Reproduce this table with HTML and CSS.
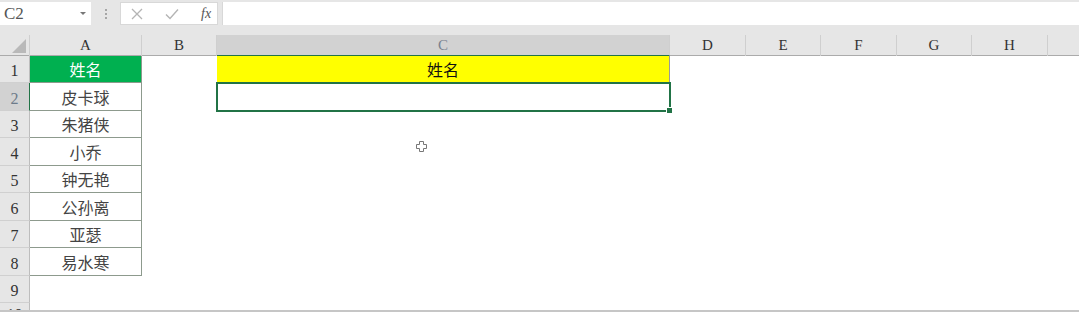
FILE: index.html
```
<!DOCTYPE html>
<html lang="zh-CN">
<head>
<meta charset="utf-8">
<title>Sheet</title>
<link rel="stylesheet" href="styles.css">
</head>
<body>
<div class="app">
  <div class="fbar">
    <div class="namebox"><span class="ref">C2</span><span class="dd"></span></div>
    <div class="grip"><i></i><i></i><i></i></div>
    <div class="btns">
      <svg class="ic" width="12" height="12" viewBox="0 0 12 12"><path d="M1 1L11 11M11 1L1 11" stroke="#b4b4b4" stroke-width="1.3" fill="none"/></svg>
      <svg class="ic" width="14" height="12" viewBox="0 0 14 12"><path d="M1 6.5L5 10.5L13 1.5" stroke="#b4b4b4" stroke-width="1.4" fill="none"/></svg>
      <span class="fx">fx</span>
    </div>
    <div class="finput"></div>
  </div>
  <div class="gap"></div>
  <div class="row colhead">
    <div class="corner"><svg width="14" height="14" viewBox="0 0 14 14"><path d="M14 0L14 14L0 14Z" fill="#b9b9b9"/></svg></div>
    <div class="ch">A</div><div class="ch">B</div><div class="ch sel-h">C</div><div class="ch">D</div><div class="ch">E</div><div class="ch">F</div><div class="ch">G</div><div class="ch">H</div><div class="ch last"></div>
  </div>
  <div class="row r27"><div class="rh">1</div><div class="c a head">姓名</div><div class="c"></div><div class="c yellow">姓名</div><div class="c"></div><div class="c"></div><div class="c"></div><div class="c"></div><div class="c"></div><div class="c"></div></div>
  <div class="row r28"><div class="rh sel-r">2</div><div class="c a">皮卡球</div><div class="c"></div><div class="c active"></div><div class="c"></div><div class="c"></div><div class="c"></div><div class="c"></div><div class="c"></div><div class="c"></div></div>
  <div class="row r27"><div class="rh">3</div><div class="c a">朱猪侠</div><div class="c"></div><div class="c"></div><div class="c"></div><div class="c"></div><div class="c"></div><div class="c"></div><div class="c"></div><div class="c"></div></div>
  <div class="row r28"><div class="rh">4</div><div class="c a">小乔</div><div class="c"></div><div class="c"></div><div class="c"></div><div class="c"></div><div class="c"></div><div class="c"></div><div class="c"></div><div class="c"></div></div>
  <div class="row r27"><div class="rh">5</div><div class="c a">钟无艳</div><div class="c"></div><div class="c"></div><div class="c"></div><div class="c"></div><div class="c"></div><div class="c"></div><div class="c"></div><div class="c"></div></div>
  <div class="row r28"><div class="rh">6</div><div class="c a">公孙离</div><div class="c"></div><div class="c"></div><div class="c"></div><div class="c"></div><div class="c"></div><div class="c"></div><div class="c"></div><div class="c"></div></div>
  <div class="row r27"><div class="rh">7</div><div class="c a">亚瑟</div><div class="c"></div><div class="c"></div><div class="c"></div><div class="c"></div><div class="c"></div><div class="c"></div><div class="c"></div><div class="c"></div></div>
  <div class="row r28"><div class="rh">8</div><div class="c a">易水寒</div><div class="c"></div><div class="c"></div><div class="c"></div><div class="c"></div><div class="c"></div><div class="c"></div><div class="c"></div><div class="c"></div></div>
  <div class="row r27"><div class="rh">9</div><div class="c"></div><div class="c"></div><div class="c"></div><div class="c"></div><div class="c"></div><div class="c"></div><div class="c"></div><div class="c"></div><div class="c"></div></div>
  <div class="row r28"><div class="rh top">10</div><div class="c"></div><div class="c"></div><div class="c"></div><div class="c"></div><div class="c"></div><div class="c"></div><div class="c"></div><div class="c"></div><div class="c"></div></div>
  <svg class="cursor" width="11" height="11" viewBox="0 0 11 11"><path d="M3.5 0.5H7.5V3.5H10.5V7.5H7.5V10.5H3.5V7.5H0.5V3.5H3.5Z" fill="#fff" stroke="#777" stroke-width="1"/></svg>
</div>
</body>
</html>
```
FILE: styles.css
```
* { box-sizing: border-box; }
html, body { margin: 0; padding: 0; background: #fff; }
body { width: 1079px; height: 312px; overflow: hidden; }
.app { position: relative; height: 312px; overflow: hidden; border-bottom: 2px solid #c6c6c6; }

.fbar { display: flex; align-items: center; height: 27px; background: #e6e6e6; padding: 2px 0 2px 0; }
.namebox { width: 91px; height: 23px; background: #fff; display: flex; align-items: center; justify-content: space-between; padding: 0 5px 0 4px; }
.ref { font-family: "Liberation Serif", serif; font-size: 17px; color: #555; }
.dd { width: 0; height: 0; border-left: 3px solid transparent; border-right: 3px solid transparent; border-top: 3px solid #777; }
.grip { width: 29px; display: flex; flex-direction: column; align-items: center; gap: 2px; }
.grip i { width: 2px; height: 2px; background: #a6a6a6; display: block; }
.btns { width: 98px; height: 23px; background: #fff; border: 1px solid #d8d8d8; display: flex; align-items: center; padding-left: 10px; gap: 22px; }
.fx { font-family: "Liberation Serif", serif; font-style: italic; font-size: 14px; color: #555; }
.finput { flex: 1; height: 23px; margin-left: 4px; background: #fff; border-left: 1px solid #d8d8d8; }
.gap { height: 8px; background: #e6e6e6; }

.row { display: grid; grid-template-columns: 30px 112px 75px 453px 76px 75px 76px 75px 76px 1fr; }
.r27 { height: 27px; }
.r28 { height: 28px; }

.colhead { height: 21px; background: #e6e6e6; border-bottom: 1px solid #ababab; }
.corner { display: flex; align-items: flex-end; justify-content: flex-end; padding: 0 3px 3px 0; border-right: 1px solid #cfcfcf; }
.ch { font-family: "Liberation Serif", serif; font-size: 15px; color: #333; text-align: center; line-height: 20px; border-right: 1px solid #cfcfcf; }
.ch.last { border-right: none; }
.sel-h { background: #d2d2d2; color: #7a8290; border-bottom: 1px solid #217346; }

.rh { background: #e6e6e6; border-right: 1px solid #bdbdbd; border-bottom: 1px solid #d0d0d0; font-family: "Liberation Serif", serif; font-size: 16px; color: #333; text-align: center; display: flex; align-items: flex-end; justify-content: center; padding-bottom: 2px; }
.rh.top { align-items: flex-start; padding-top: 3px; padding-bottom: 0; }
.sel-r { background: #d2d2d2; color: #6d7b8a; border-right: 1px solid #217346; }

.c { font-family: "Noto Sans CJK SC", sans-serif; font-size: 16px; color: #444; display: flex; align-items: center; justify-content: center; }
.a { border-right: 1px solid #8d9a8d; border-bottom: 1px solid #8d9a8d; }
.head { background: #00b050; color: #fff; }
.yellow { background: #ffff00; color: #111; border-right: 1px solid #9a9a9a; border-bottom: 1px solid #9a9a9a; }
.active { position: relative; }
.active::after { content: ""; position: absolute; left: -1px; top: -1px; right: -1px; bottom: -1px; border: 2px solid #217346; }
.active::before { content: ""; position: absolute; right: -3px; bottom: -3px; width: 5px; height: 5px; background: #217346; border: 1px solid #fff; z-index: 2; }

.cursor { position: absolute; left: 416px; top: 141px; }
```
